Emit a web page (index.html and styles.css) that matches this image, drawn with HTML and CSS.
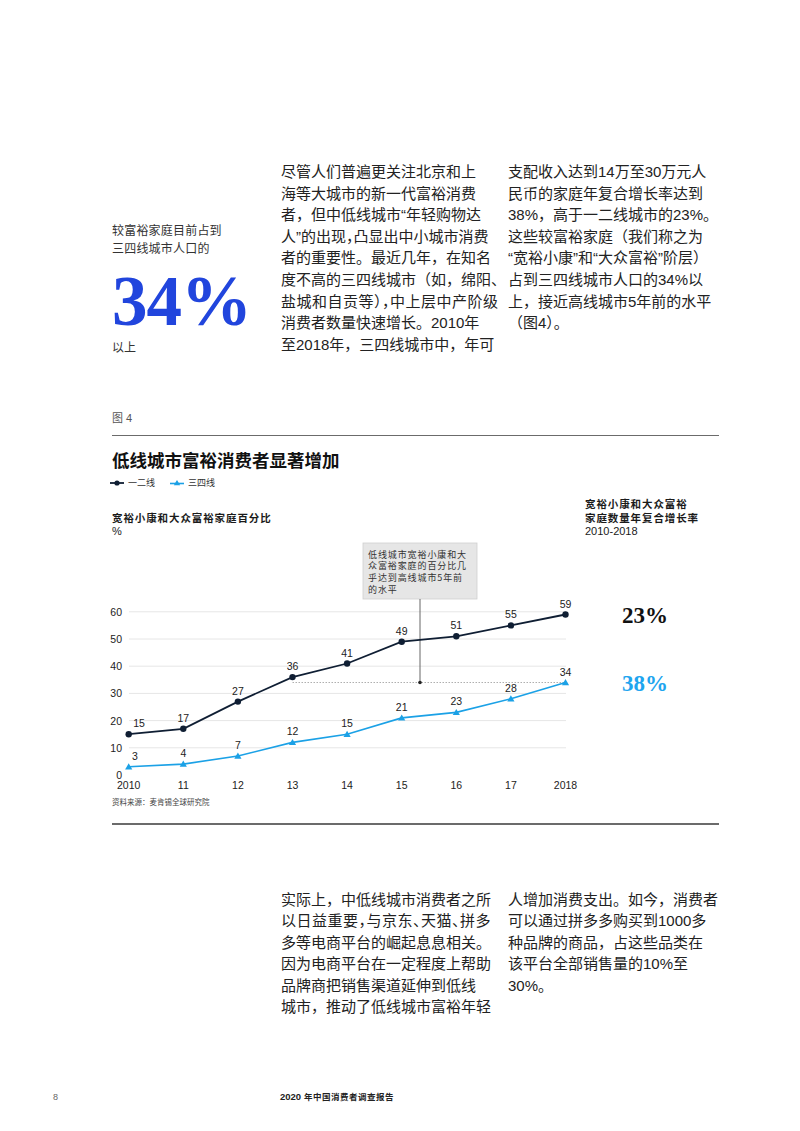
FILE: index.html
```html
<!DOCTYPE html>
<html lang="zh-CN">
<head>
<meta charset="utf-8">
<title>2020年中国消费者调查报告</title>
<link rel="stylesheet" href="styles.css">
</head>
<body>
<div class="page">
  <section class="intro">
    <div class="callout">
      <p class="callout-lead">较富裕家庭目前占到<br>三四线城市人口的</p>
      <p class="callout-num">34%</p>
      <p class="callout-tail">以上</p>
    </div>
    <p class="body-col">尽管人们普遍更关注北京和上<br>海等大城市的新一代富裕消费<br>者，但中低线城市“年轻购物达<br><span class="tight">人”的出现，凸显出中小城市消费</span><br>者的重要性。最近几年，在知名<br>度不高的三四线城市（如，绵阳、<br><span class="tight tight-pad">盐城和自贡等），中上层中产阶级</span><br>消费者数量快速增长。2010年<br>至2018年，三四线城市中，年可</p>
    <p class="body-col">支配收入达到14万至30万元人<br>民币的家庭年复合增长率达到<br>38%，高于一二线城市的23%。<br>这些较富裕家庭（我们称之为<br>“宽裕小康”和“大众富裕”阶层）<br>占到三四线城市人口的34%以<br>上，接近高线城市5年前的水平<br>（图4）。</p>
  </section>

  <div class="fig-label">图 4</div>
  <hr class="rule">
  <h2 class="chart-title">低线城市富裕消费者显著增加</h2>
  <div class="legend">
    <span class="legend-item">
      <svg class="legend-mark" width="14" height="8" viewBox="0 0 14 8"><line x1="0" y1="4" x2="14" y2="4" stroke="#0f1e33" stroke-width="1.8"/><circle cx="7" cy="4" r="2.6" fill="#0f1e33"/></svg>
      <span>一二线</span>
    </span>
    <span class="legend-item legend-item-2">
      <svg class="legend-mark" width="14" height="8" viewBox="0 0 14 8"><line x1="0" y1="4.5" x2="14" y2="4.5" stroke="#1ba1e6" stroke-width="1.6"/><polygon points="7,1 10.2,6.2 3.8,6.2" fill="#1ba1e6"/></svg>
      <span>三四线</span>
    </span>
  </div>

  <div class="chart-head">
    <div class="axis-title">宽裕小康和大众富裕家庭百分比<br><span class="unit">%</span></div>
    <div class="cagr-title">宽裕小康和大众富裕<br>家庭数量年复合增长率<br><span class="unit">2010-2018</span></div>
  </div>

  <svg class="chart" width="620" height="257" viewBox="100 538 620 257">
    <g class="grid">
      <line x1="129" y1="746.8" x2="566" y2="746.8"/>
      <line x1="129" y1="719.6" x2="566" y2="719.6"/>
      <line x1="129" y1="692.4" x2="566" y2="692.4"/>
      <line x1="129" y1="665.2" x2="566" y2="665.2"/>
      <line x1="129" y1="638" x2="566" y2="638"/>
      <line x1="129" y1="610.8" x2="566" y2="610.8"/>
    </g>
    <g class="ylab">
      <text x="122" y="614.8">60</text>
      <text x="122" y="642">50</text>
      <text x="122" y="669.2">40</text>
      <text x="122" y="696.4">30</text>
      <text x="122" y="723.6">20</text>
      <text x="122" y="750.8">10</text>
      <text x="122" y="778">0</text>
    </g>
    <g class="xlab">
      <text x="128.7" y="788">2010</text>
      <text x="183.3" y="788">11</text>
      <text x="237.9" y="788">12</text>
      <text x="292.5" y="788">13</text>
      <text x="347.1" y="788">14</text>
      <text x="401.7" y="788">15</text>
      <text x="456.3" y="788">16</text>
      <text x="510.9" y="788">17</text>
      <text x="565.5" y="788">2018</text>
    </g>

    <line class="ref-line" x1="292.5" y1="681.5" x2="565.5" y2="681.5"/>

    <rect class="note-box" x="363" y="542" width="114" height="56"/>
    <g class="note-text">
      <text x="368" y="556.5">低线城市宽裕小康和大</text>
      <text x="368" y="568.3">众富裕家庭的百分比几</text>
      <text x="368" y="580">乎达到高线城市5年前</text>
      <text x="368" y="591.8">的水平</text>
    </g>
    <line class="note-line" x1="420" y1="598" x2="420" y2="681.5"/>
    <circle cx="420" cy="681.5" r="1.8" fill="#222"/>

    <polyline class="line-dark" points="128.7,733.2 183.3,727.8 237.9,700.6 292.5,676.1 347.1,662.5 401.7,640.7 456.3,635.3 510.9,624.4 565.5,613.5"/>
    <g fill="#0f1e33">
      <circle cx="128.7" cy="733.2" r="3.2"/>
      <circle cx="183.3" cy="727.8" r="3.2"/>
      <circle cx="237.9" cy="700.6" r="3.2"/>
      <circle cx="292.5" cy="676.1" r="3.2"/>
      <circle cx="347.1" cy="662.5" r="3.2"/>
      <circle cx="401.7" cy="640.7" r="3.2"/>
      <circle cx="456.3" cy="635.3" r="3.2"/>
      <circle cx="510.9" cy="624.4" r="3.2"/>
      <circle cx="565.5" cy="613.5" r="3.2"/>
    </g>

    <polyline class="line-blue" points="128.7,765.8 183.3,763.1 237.9,755 292.5,741.4 347.1,733.2 401.7,716.9 456.3,711.4 510.9,697.8 565.5,681.5"/>
    <g fill="#1ba1e6">
      <polygon points="128.7,762.3 132.3,768.5 125.1,768.5"/>
      <polygon points="183.3,759.6 186.9,765.8 179.7,765.8"/>
      <polygon points="237.9,751.5 241.5,757.7 234.3,757.7"/>
      <polygon points="292.5,737.9 296.1,744.1 288.9,744.1"/>
      <polygon points="347.1,729.7 350.7,735.9 343.5,735.9"/>
      <polygon points="401.7,713.4 405.3,719.6 398.1,719.6"/>
      <polygon points="456.3,707.9 459.9,714.1 452.7,714.1"/>
      <polygon points="510.9,694.3 514.5,700.5 507.3,700.5"/>
      <polygon points="565.5,678 569.1,684.2 561.9,684.2"/>
    </g>

    <g class="vlab">
      <text x="139" y="726.2">15</text>
      <text x="183.3" y="720.8">17</text>
      <text x="237.9" y="693.6">27</text>
      <text x="292.5" y="669.1">36</text>
      <text x="347.1" y="655.5">41</text>
      <text x="401.7" y="633.7">49</text>
      <text x="456.3" y="628.3">51</text>
      <text x="510.9" y="617.4">55</text>
      <text x="565.5" y="606.5">59</text>
      <text x="135" y="758.8">3</text>
      <text x="183.3" y="756.1">4</text>
      <text x="237.9" y="748">7</text>
      <text x="292.5" y="734.4">12</text>
      <text x="347.1" y="726.2">15</text>
      <text x="401.7" y="709.9">21</text>
      <text x="456.3" y="704.4">23</text>
      <text x="510.9" y="690.8">28</text>
      <text x="565.5" y="674.5">34</text>
    </g>

    <text class="cagr cagr-dark" x="622" y="622">23%</text>
    <text class="cagr cagr-blue" x="622" y="690">38%</text>
  </svg>

  <p class="source">资料来源：麦肯锡全球研究院</p>
  <hr class="rule rule-bottom">

  <section class="outro">
    <div></div>
    <p class="body-col">实际上，中低线城市消费者之所<br><span class="tight tight-pad">以日益重要，与京东、天猫、拼多</span><br>多等电商平台的崛起息息相关。<br>因为电商平台在一定程度上帮助<br>品牌商把销售渠道延伸到低线<br>城市，推动了低线城市富裕年轻</p>
    <p class="body-col">人增加消费支出。如今，消费者<br>可以通过拼多多购买到1000多<br>种品牌的商品，占这些品类在<br>该平台全部销售量的10%至<br>30%。</p>
  </section>
</div>

<footer class="footer">
  <span class="page-num">8</span>
  <span class="footer-title"><b class="footer-year">2020</b> 年中国消费者调查报告</span>
</footer>
</body>
</html>
```

FILE: styles.css
```css
* { box-sizing: border-box; }

body {
  margin: 0;
  background: #fff;
  color: #222;
  font-family: "Liberation Sans", "Noto Sans CJK SC", sans-serif;
}

.page {
  width: 719px;
  padding: 161px 0 0 112px;
}

.intro,
.outro {
  display: grid;
  grid-template-columns: 169px 227px 1fr;
}

.body-col {
  margin: 0;
  font-size: 15px;
  line-height: 21.6px;
  white-space: nowrap;
  color: #222;
}

.tight {
  font-feature-settings: "halt";
}

.tight-pad {
  letter-spacing: 0.5px;
}

.callout {
  padding-top: 61px;
}

.callout-lead {
  margin: 0;
  font-size: 12px;
  line-height: 18px;
  color: #333;
  letter-spacing: 0.2px;
}

.callout-num {
  margin: 14px 0 0;
  font-family: "Liberation Serif", "DejaVu Serif", serif;
  font-weight: 700;
  font-size: 71px;
  line-height: 58px;
  letter-spacing: -1px;
  color: #2145dd;
}

.callout-tail {
  margin: 9px 0 0;
  font-size: 12px;
  line-height: 18px;
  color: #333;
}

.fig-label {
  margin-top: 53.5px;
  font-size: 11px;
  line-height: 14px;
  color: #555;
}

.rule {
  margin: 10px 0 0;
  border: 0;
  height: 1.5px;
  background: #6b6b6b;
  width: 607px;
}

.chart-title {
  margin: 14px 0 0;
  font-size: 17.5px;
  line-height: 22px;
  font-weight: 700;
  color: #111;
}

.legend {
  margin: 5px 0 0 -2px;
  display: flex;
  align-items: center;
  font-size: 9px;
  line-height: 12px;
  color: #333;
}

.legend-item {
  display: flex;
  align-items: center;
  gap: 4px;
}

.legend-item-2 {
  margin-left: 15px;
}

.legend-mark {
  display: block;
}

.chart-head {
  margin-top: 9px;
  display: grid;
  grid-template-columns: 473px 1fr;
  align-items: end;
  font-size: 10.5px;
  line-height: 13.5px;
  font-weight: 700;
  letter-spacing: 0.9px;
  color: #1a1a1a;
  white-space: nowrap;
}

.unit {
  font-family: "Liberation Sans", sans-serif;
  font-weight: 400;
  font-size: 11px;
  letter-spacing: 0;
}

.chart {
  display: block;
  margin-left: -12px;
  overflow: visible;
}

.grid line {
  stroke: #e6e6e6;
  stroke-width: 1;
}

.ylab text,
.xlab text,
.vlab text {
  font-family: "Liberation Sans", sans-serif;
  font-size: 10.5px;
  fill: #222;
}

.ylab text { text-anchor: end; }
.xlab text,
.vlab text { text-anchor: middle; }

.ref-line {
  stroke: #9a9a9a;
  stroke-width: 0.8;
  stroke-dasharray: 1.5 1.5;
}

.note-box {
  fill: #e6e6e6;
  stroke: #cfcfcf;
  stroke-width: 0.8;
}

.note-text text {
  font-family: "Noto Sans CJK SC", sans-serif;
  font-size: 9px;
  letter-spacing: 0.9px;
  fill: #333;
}

.note-line {
  stroke: #666;
  stroke-width: 1;
}

.line-dark {
  fill: none;
  stroke: #0f1e33;
  stroke-width: 1.8;
}

.line-blue {
  fill: none;
  stroke: #1ba1e6;
  stroke-width: 1.6;
}

.cagr {
  font-family: "Liberation Serif", "DejaVu Serif", serif;
  font-weight: 700;
  font-size: 23px;
}

.cagr-dark { fill: #111; }
.cagr-blue { fill: #1ea5ef; }

.source {
  margin: 2.5px 0 0;
  font-size: 7.5px;
  line-height: 10px;
  color: #444;
}

.rule-bottom {
  margin-top: 15px;
}

.outro {
  margin-top: 64px;
}

.footer {
  margin-top: 73px;
  padding-left: 53px;
  display: grid;
  grid-template-columns: 227px auto;
  font-size: 8.5px;
  line-height: 12px;
  color: #222;
}

.page-num {
  font-size: 9px;
  color: #666;
}

.footer-title {
  font-weight: 700;
  letter-spacing: 0.5px;
}

.footer-year {
  font-size: 9.5px;
  letter-spacing: 0;
}
```
